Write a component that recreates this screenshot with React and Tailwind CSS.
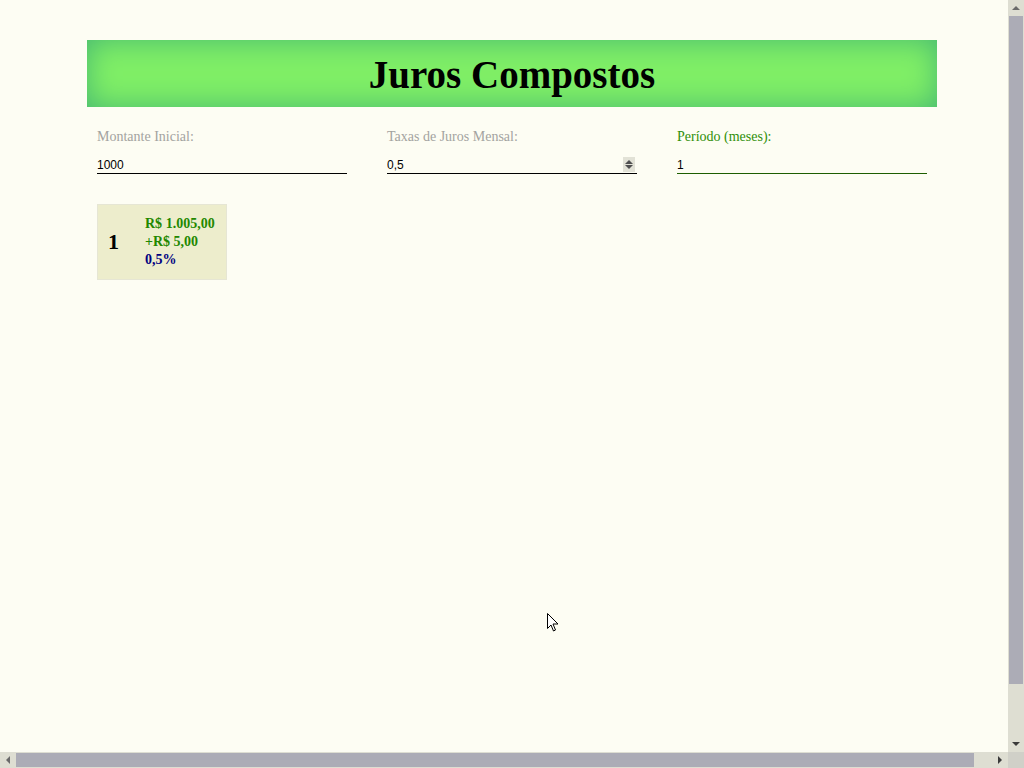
import { useState } from 'react';

const serif = "font-['Liberation_Serif',_'Times_New_Roman',_serif]";
const sans = "font-['Liberation_Sans',_Arial,_sans-serif]";

function Field({ label, value, onChange, active, spinner }) {
  return (
    <div className="flex w-[250px] flex-col">
      <label className={`${serif} text-[14px] leading-[16px] ${active ? 'text-[#2f8f0a]' : 'text-[#a3a3a0]'}`}>{label}</label>
      <div className={`mt-[13px] flex h-[16px] items-end border-b ${active ? 'border-[#1d5e00]' : 'border-black'}`}>
        <input
          value={value}
          onChange={e => onChange(e.target.value)}
          className={`${sans} h-[16px] w-full bg-transparent p-0 text-[12px] leading-[14px] text-black outline-none`}
        />
        {spinner && (
          <div className="mb-[1px] mr-[2px] flex h-[15px] w-[13px] flex-col items-center justify-center gap-[1px] bg-[#e2e2d6]">
            <div className="h-0 w-0 border-x-[4px] border-b-[4px] border-x-transparent border-b-[#505050]" />
            <div className="h-0 w-0 border-x-[4px] border-t-[4px] border-x-transparent border-t-[#505050]" />
          </div>
        )}
      </div>
    </div>
  );
}

function fmt(n) {
  return n.toLocaleString('pt-BR', { minimumFractionDigits: 2, maximumFractionDigits: 2 });
}

export default function App() {
  const [montante, setMontante] = useState('1000');
  const [taxa, setTaxa] = useState('0,5');
  const [periodo, setPeriodo] = useState('1');

  const p = parseFloat(montante.replace(',', '.')) || 0;
  const t = parseFloat(taxa.replace(',', '.')) || 0;
  const n = Math.max(0, Math.min(60, parseInt(periodo) || 0));
  const meses = Array.from({ length: n }, (_, i) => {
    const total = p * Math.pow(1 + t / 100, i + 1);
    return { mes: i + 1, total, ganho: total - p, pct: ((total / p - 1) * 100) };
  });

  return (
    <div className="relative flex h-screen w-screen flex-col overflow-hidden bg-[#fdfdf3]">
      <div className="flex min-h-0 flex-1">
        <div className="min-w-0 flex-1 pt-[40px]">
          <div className="ml-[87px] w-[850px]">
            <header className="flex h-[67px] items-center justify-center bg-[#80ef66] shadow-[inset_0_0_30px_#45b872]">
              <h1 className={`${serif} pt-[1px] text-[39px] font-bold leading-none text-black`}>Juros Compostos</h1>
            </header>

            <div className="flex gap-[40px] px-[10px] pt-[22px]">
              <Field label="Montante Inicial:" value={montante} onChange={setMontante} />
              <Field label="Taxas de Juros Mensal:" value={taxa} onChange={setTaxa} spinner />
              <Field label="Período (meses):" value={periodo} onChange={setPeriodo} active />
            </div>

            <div className="flex flex-wrap gap-[10px] px-[10px] pt-[30px]">
              {meses.map(m => (
                <div key={m.mes} className="flex h-[76px] w-[130px] items-center border border-[#e6e6d4] bg-[#ededcc] pl-[10px]">
                  <span className={`${serif} w-[37px] text-[22px] font-bold leading-none text-black`}>{m.mes}</span>
                  <div className={`${serif} flex flex-col text-[14px] font-bold leading-[18px]`}>
                    <span className="text-[#228800]">R$ {fmt(m.total)}</span>
                    <span className="text-[#228800]">+R$ {fmt(m.ganho)}</span>
                    <span className="text-[#000080]">{m.pct.toLocaleString('pt-BR', { maximumFractionDigits: 2 })}%</span>
                  </div>
                </div>
              ))}
            </div>
          </div>
        </div>

        {/* vertical scrollbar */}
        <div className="flex w-[16px] flex-col bg-[#deded2]">
          <div className="flex h-[16px] items-center justify-center">
            <div className="h-0 w-0 border-x-[4px] border-b-[4px] border-x-transparent border-b-[#6a6a6a]" />
          </div>
          <div className="mx-[1px] h-[668px] bg-[#acacb6]" />
          <div className="flex-1" />
          <div className="flex h-[16px] items-center justify-center">
            <div className="h-0 w-0 border-x-[4px] border-t-[4px] border-x-transparent border-t-[#3a3a3a]" />
          </div>
        </div>
      </div>

      {/* horizontal scrollbar */}
      <div className="flex h-[16px] bg-[#deded2]">
        <div className="flex w-[16px] items-center justify-center">
          <div className="h-0 w-0 border-y-[4px] border-r-[4px] border-y-transparent border-r-[#6a6a6a]" />
        </div>
        <div className="my-[1px] w-[958px] bg-[#acacb6]" />
        <div className="flex-1" />
        <div className="flex w-[16px] items-center justify-center">
          <div className="h-0 w-0 border-y-[4px] border-l-[4px] border-y-transparent border-l-[#3a3a3a]" />
        </div>
        <div className="w-[16px] bg-[#d0d0c8]" />
      </div>

      {/* mouse pointer */}
      <svg className="pointer-events-none absolute left-[547px] top-[613px]" width="12" height="19" viewBox="0 0 12 19">
        <path d="M0.5 0.5 L0.5 15.5 L4 12 L6.5 18 L8.5 17 L6 11 L11 11 Z" fill="#fff" stroke="#000" strokeWidth="1" />
      </svg>
    </div>
  );
}
